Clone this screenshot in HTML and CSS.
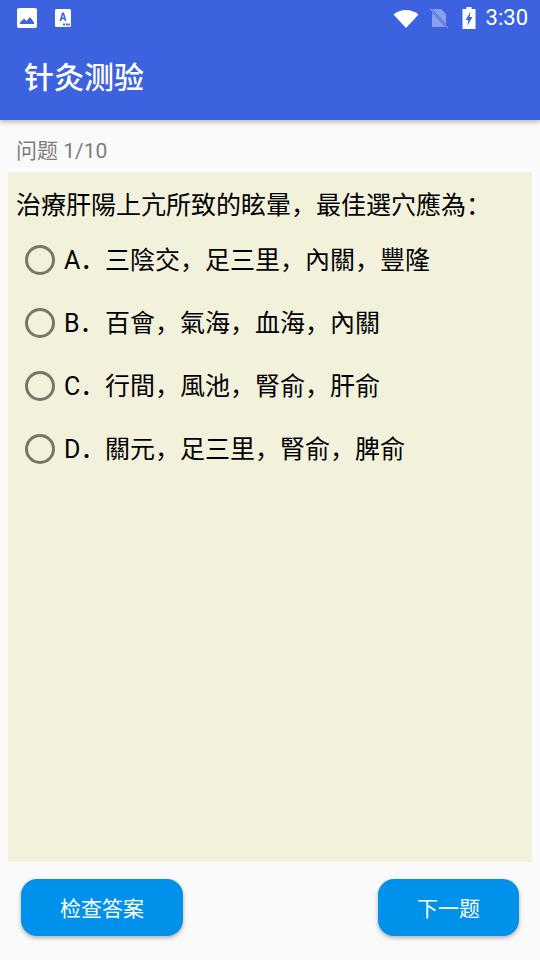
FILE: index.html
```html
<!DOCTYPE html>
<html lang="zh-CN">
<head>
<meta charset="utf-8">
<title>针灸测验</title>
<link rel="stylesheet" href="styles.css">
</head>
<body>
<div class="app">
  <header class="appbar">
    <div class="status">
      <div class="status-left">
        <svg class="ic-photo" width="20" height="20" viewBox="0 0 20 20"><rect x="0" y="0" width="20" height="20" rx="2" fill="#fff"/><path d="M3 16 L3 14.5 L7 10.5 L9.5 13 L13 9 L17 14.5 L17 16 Z" fill="#3d62e0"/></svg>
        <svg class="ic-app" width="16" height="18" viewBox="0 0 16 18"><rect width="16" height="18" rx="1.5" fill="#fff"/><path d="M4.5 12 L7 3.5 H9 L11.5 12 H9.7 L9.3 10.2 H6.7 L6.3 12 Z M7.1 8.6 H8.9 L8 5.4 Z" fill="#3d62e0"/><rect x="8" y="14.5" width="2" height="2" fill="#3d62e0"/><rect x="11" y="14.5" width="2" height="2" fill="#3d62e0"/><rect x="13.4" y="14.5" width="1.6" height="2" fill="#3d62e0"/></svg>
      </div>
      <div class="status-right">
        <svg class="ic-wifi" width="26" height="20" viewBox="0 0 26 20"><path d="M0.5 6.5 C7.5 0.5 18.5 0.5 25.5 6.5 L13 20 Z" fill="#fff"/></svg>
        <svg class="ic-sim" width="20" height="20" viewBox="0 0 20 20"><path d="M3 1 H12 L17 6 V19 H3 Z" fill="#fff" fill-opacity="0.4"/><path d="M1 0.5 L19 20" stroke="#3d62e0" stroke-width="2.4"/><path d="M1 0.5 L19 20" stroke="#fff" stroke-opacity="0.4" stroke-width="1.1"/></svg>
        <svg class="ic-batt" width="14" height="22" viewBox="0 0 14 22"><path d="M4.5 0 H9.5 V2 H13.5 V22 H0.5 V2 H4.5 Z" fill="#fff"/><path d="M8.6 4.5 L3.6 13 H6.4 L5.2 19 L10.6 10 H7.6 Z" fill="#3d62e0"/></svg>
        <span class="clock">3:30</span>
      </div>
    </div>
    <h1 class="title">针灸测验</h1>
  </header>

  <main class="content">
    <p class="progress">问题 1/10</p>
    <section class="card">
      <p class="question">治療肝陽上亢所致的眩暈，最佳選穴應為：</p>
      <ul class="options">
        <li class="option"><span class="radio"></span><span class="label"><span class="letter">A．</span>三陰交，足三里，內關，豐隆</span></li>
        <li class="option"><span class="radio"></span><span class="label"><span class="letter">B．</span>百會，氣海，血海，內關</span></li>
        <li class="option"><span class="radio"></span><span class="label"><span class="letter">C．</span>行間，風池，腎俞，肝俞</span></li>
        <li class="option"><span class="radio"></span><span class="label"><span class="letter">D．</span>關元，足三里，腎俞，脾俞</span></li>
      </ul>
    </section>
  </main>

  <footer class="actions">
    <button class="btn btn-check">检查答案</button>
    <button class="btn btn-next">下一题</button>
  </footer>
</div>
</body>
</html>
```
FILE: styles.css
```css
* { box-sizing: border-box; }
html, body { margin: 0; padding: 0; }
body {
  width: 540px;
  height: 960px;
  background: #fafafa;
  font-family: Roboto, "Noto Sans CJK SC", sans-serif;
  overflow: hidden;
}
.app { display: flex; flex-direction: column; height: 960px; }
.appbar {
  height: 120px;
  background: #3d62e0;
  box-shadow: 0 2px 5px rgba(0,0,0,.28);
  position: relative;
  z-index: 1;
  flex: none;
}
.status {
  height: 36px;
  display: flex;
  justify-content: space-between;
  align-items: center;
  padding: 0 12px 0 17px;
}
.status-left { display: flex; align-items: center; gap: 18px; }
.status-right { display: flex; align-items: center; }
.ic-wifi { margin-right: 10px; }
.ic-sim { margin-right: 13px; }
.ic-batt { margin-right: 10px; }
.clock { color: #fff; font-size: 22px; line-height: 36px; }
.title {
  margin: 0;
  padding: 4px 0 0 24px;
  font-size: 30px;
  line-height: 76px;
  height: 76px;
  font-weight: 500;
  color: #fff;
}
.content { flex: 1; display: flex; flex-direction: column; padding: 0 8px; min-height: 0; }
.progress {
  margin: 0;
  height: 52px;
  padding: 17px 0 0 8px;
  font-size: 21px;
  line-height: 28px;
  color: #7d7d7d;
}
.card { flex: 1; background: #f2f1dc; padding: 17px 0 0 8px; }
.question { margin: 0; font-size: 25px; line-height: 34px; color: #000; white-space: nowrap; }
.options { list-style: none; margin: 5px 0 0; padding: 0; }
.option { height: 63px; display: flex; align-items: center; padding-left: 9px; }
.radio {
  width: 30px;
  height: 30px;
  border: 3px solid #78766a;
  border-radius: 50%;
  flex: none;
}
.label { margin-left: 9px; font-size: 25px; line-height: 34px; color: #000; white-space: nowrap; position: relative; top: 1px; }
.letter { display: inline-block; width: 41px; }
.actions {
  flex: none;
  height: 98px;
  display: flex;
  justify-content: space-between;
  padding: 17px 21px 0;
}
.btn {
  height: 57px;
  border: 0;
  border-radius: 16px;
  background: #0091ea;
  color: #fff;
  font-family: inherit;
  font-size: 21px;
  box-shadow: 0 2px 4px rgba(0,0,0,.3);
  padding: 0 0 2px;
}
.btn-check { width: 162px; }
.btn-next { width: 141px; }
```
